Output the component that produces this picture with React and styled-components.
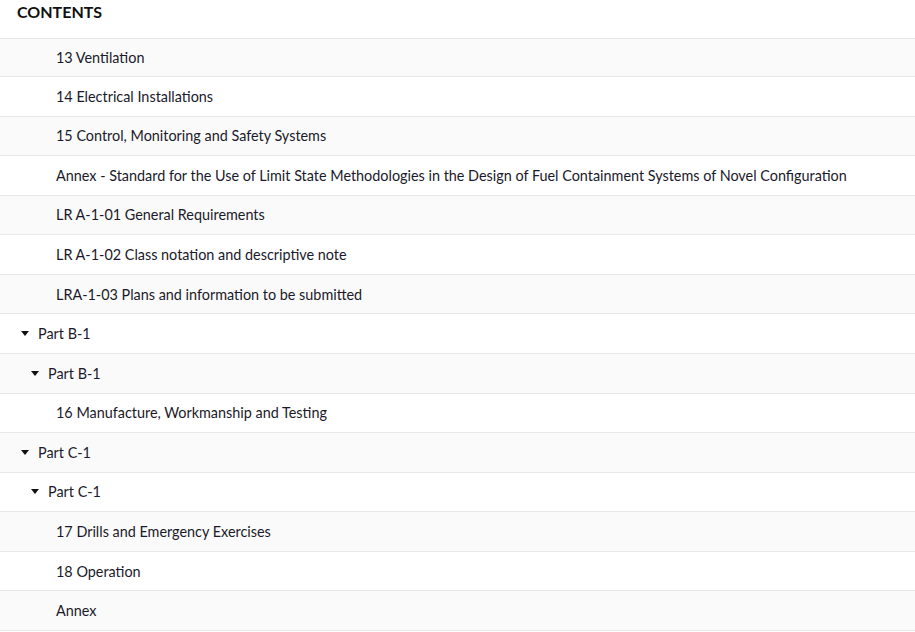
import React from 'react';
import styled, { createGlobalStyle } from 'styled-components';

const GlobalStyle = createGlobalStyle`
  body {
    margin: 0;
    background: #ffffff;
    font-family: "Source Sans Pro", Lato, "Noto Sans", sans-serif;
    color: #1a1a1a;
  }
`;

const Panel = styled.div`
  width: 915px;
  background: #ffffff;
`;

const Title = styled.h2`
  margin: 0;
  box-sizing: border-box;
  height: 39px;
  padding: 0 0 0 17px;
  font-size: 16px;
  font-weight: 700;
  line-height: 23px;
  color: #111;
  border-bottom: 1px solid #e8e8e8;
`;

const List = styled.ul`
  list-style: none;
  margin: 0;
  padding: 0;
`;

const Row = styled.li`
  display: flex;
  align-items: center;
  box-sizing: border-box;
  height: 39.57px;
  padding-left: ${({ $indent }) => $indent}px;
  border-bottom: 1px solid #e8e8e8;
  background: ${({ $shaded }) => ($shaded ? '#fafafa' : '#ffffff')};
  font-size: 14.4px;
  color: #1a1a2a;

  &:first-child {
    height: 38px;
  }
`;

const Caret = styled.span`
  display: inline-block;
  width: 0;
  height: 0;
  border-left: 4px solid transparent;
  border-right: 4px solid transparent;
  border-top: 5px solid #111;
  margin-right: 9px;
`;

const items = [
  { label: '13 Ventilation', level: 2 },
  { label: '14 Electrical Installations', level: 2 },
  { label: '15 Control, Monitoring and Safety Systems', level: 2 },
  {
    label:
      'Annex - Standard for the Use of Limit State Methodologies in the Design of Fuel Containment Systems of Novel Configuration',
    level: 2,
  },
  { label: 'LR A-1-01 General Requirements', level: 2 },
  { label: 'LR A-1-02 Class notation and descriptive note', level: 2 },
  { label: 'LRA-1-03 Plans and information to be submitted', level: 2 },
  { label: 'Part B-1', level: 0, open: true },
  { label: 'Part B-1', level: 1, open: true },
  { label: '16 Manufacture, Workmanship and Testing', level: 2 },
  { label: 'Part C-1', level: 0, open: true },
  { label: 'Part C-1', level: 1, open: true },
  { label: '17 Drills and Emergency Exercises', level: 2 },
  { label: '18 Operation', level: 2 },
  { label: 'Annex', level: 2 },
];

const indentFor = (level) => [21, 31, 56][level];

const App = () => (
  <>
    <GlobalStyle />
    <Panel>
      <Title>CONTENTS</Title>
      <List>
        {items.map((item, i) => (
          <Row key={i} $indent={indentFor(item.level)} $shaded={i % 2 === 0}>
            {item.open && <Caret />}
            {item.label}
          </Row>
        ))}
      </List>
    </Panel>
  </>
);

export default App;
